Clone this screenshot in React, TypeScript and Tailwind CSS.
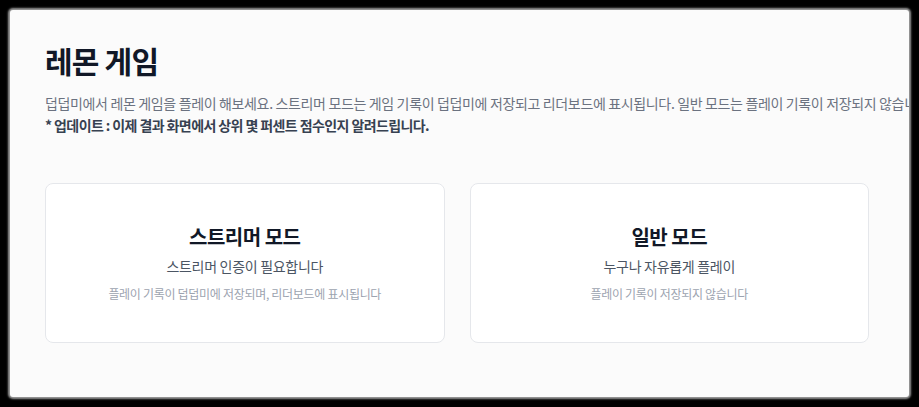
const modes = [
  {
    title: '스트리머 모드',
    sub: '스트리머 인증이 필요합니다',
    note: '플레이 기록이 덥덥미에 저장되며, 리더보드에 표시됩니다',
  },
  {
    title: '일반 모드',
    sub: '누구나 자유롭게 플레이',
    note: '플레이 기록이 저장되지 않습니다',
  },
]

export default function App() {
  return (
    <div
      className="w-[919px] h-[407px] bg-black p-[10px]"
      style={{ fontFamily: '"Noto Sans CJK KR", "Noto Sans", sans-serif' }}
    >
      <div className="h-full overflow-hidden bg-[#fbfbfb] rounded-[3px] shadow-[0_0_2px_2px_rgba(170,170,170,0.9)] pl-[35px] pt-[32px]">
        <h1 className="text-[30px] leading-[36px] font-bold text-[#111827] tracking-[-0.8px]">레몬 게임</h1>
        <p className="mt-[14px] text-[14px] leading-[22px] text-[#6b7280] whitespace-nowrap tracking-[-0.35px]">
          덥덥미에서 레몬 게임을 플레이 해보세요. 스트리머 모드는 게임 기록이 덥덥미에 저장되고 리더보드에 표시됩니다. 일반 모드는 플레이 기록이 저장되지 않습니다.
        </p>
        <p className="text-[14px] leading-[22px] font-bold text-[#374151] whitespace-nowrap tracking-[-0.6px]">
          * 업데이트 : 이제 결과 화면에서 상위 몇 퍼센트 점수인지 알려드립니다.
        </p>
        <div className="mt-[47px] w-[824px] grid grid-cols-2 gap-[25px]">
          {modes.map((m) => (
            <div
              key={m.title}
              className="bg-white border border-[#e5e7eb] rounded-lg pt-[39px] pb-10 flex flex-col items-center text-center"
            >
              <h2 className="text-[20px] leading-[28px] font-bold text-[#111827] tracking-[-0.5px]">{m.title}</h2>
              <p className="mt-[5px] text-[14px] leading-[20px] text-[#4b5563] tracking-[-0.3px]">{m.sub}</p>
              <p className="mt-[10px] text-[12px] leading-[16px] text-[#9ca3af] tracking-[-0.3px]">{m.note}</p>
            </div>
          ))}
        </div>
      </div>
    </div>
  )
}
